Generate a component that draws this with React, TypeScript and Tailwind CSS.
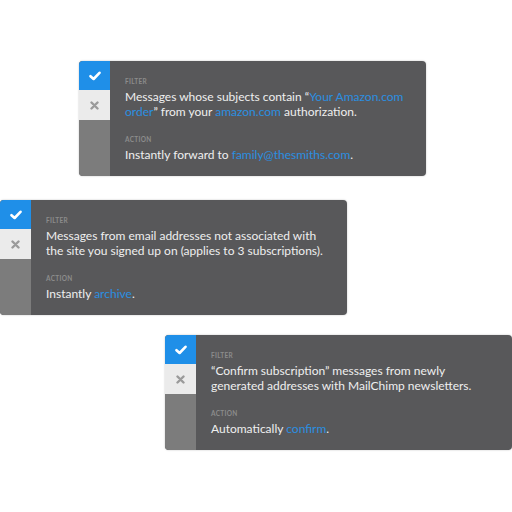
import React from "react";

const Link = ({ children }: { children: React.ReactNode }) => (
  <span className="text-[#2b8fe0]">{children}</span>
);

function RuleCard({
  filter,
  action,
  className,
}: {
  filter: React.ReactNode;
  action: React.ReactNode;
  className: string;
}) {
  return (
    <div
      className={`flex h-[115px] w-[347px] overflow-hidden rounded-[4px] bg-[#58585a] shadow-[0_0_2px_rgba(0,0,0,0.25)] ${className}`}
    >
      <div className="flex w-[31px] shrink-0 flex-col bg-[#7c7c7c]">
        <div className="flex h-[29px] items-center justify-center bg-[#1f8fe8]">
          <svg width="12" height="10" viewBox="0 0 12 10">
            <path d="M1.5 5.2 L4.6 8 L10.5 1.8" fill="none" stroke="#fff" strokeWidth="2.6" strokeLinecap="round" strokeLinejoin="round" />
          </svg>
        </div>
        <div className="flex h-[30px] items-center justify-center bg-[#ebebeb]">
          <svg width="9" height="9" viewBox="0 0 9 9">
            <path d="M1.5 1.5 L7.5 7.5 M7.5 1.5 L1.5 7.5" stroke="#9a9a9a" strokeWidth="2.4" strokeLinecap="round" />
          </svg>
        </div>
      </div>
      <div className="flex flex-1 flex-col pl-[15px] pr-[12px] pt-[17px] font-['Lato',sans-serif] text-[12px] leading-[15px] text-[#efefef]">
        <div className="text-[6.5px] font-bold uppercase leading-[8px] tracking-[0.3px] text-[#8c8c8c]">Filter</div>
        <div className="mt-[3px]">{filter}</div>
        <div className="mt-[17px] text-[6.5px] font-bold uppercase leading-[8px] tracking-[0.3px] text-[#8c8c8c]">Action</div>
        <div className="mt-[3px]">{action}</div>
      </div>
    </div>
  );
}

export default function App() {
  return (
    <div className="relative h-[512px] w-[512px] bg-white">
      <div className="flex flex-col pt-[61px]">
        <RuleCard
          className="ml-[79px]"
          filter={
            <>
              Messages whose subjects contain “<Link>Your Amazon.com order</Link>” from your <Link>amazon.com</Link> authorization.
            </>
          }
          action={
            <>
              Instantly forward to <Link>family@thesmiths.com</Link>.
            </>
          }
        />
        <RuleCard
          className="ml-0 mt-[24px]"
          filter={<>Messages from email addresses not associated with the site you signed up on (applies to 3 subscriptions).</>}
          action={
            <>
              Instantly <Link>archive</Link>.
            </>
          }
        />
        <RuleCard
          className="ml-[165px] mt-[20px]"
          filter={<>“Confirm subscription” messages from newly generated addresses with MailChimp newsletters.</>}
          action={
            <>
              Automatically <Link>confirm</Link>.
            </>
          }
        />
      </div>
    </div>
  );
}
